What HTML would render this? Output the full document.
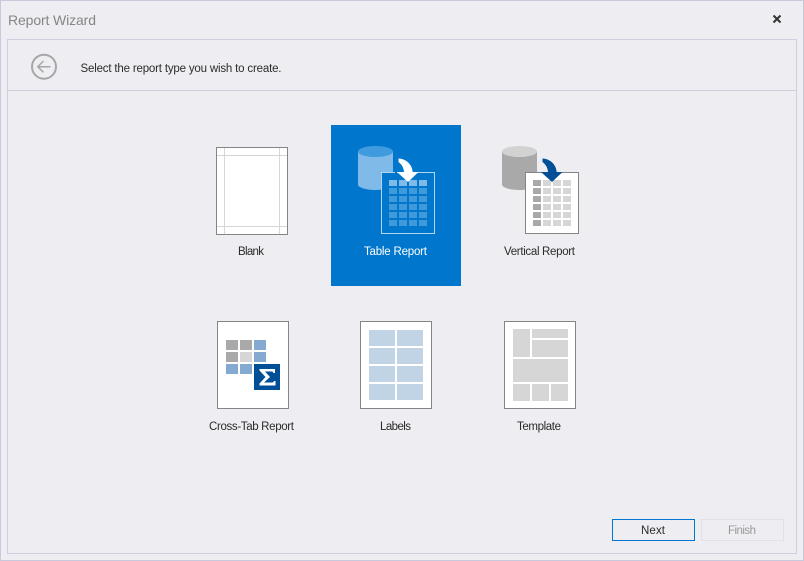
<!DOCTYPE html>
<html><head><meta charset="utf-8"><title>Report Wizard</title>
<style>
html,body{margin:0;padding:0;width:804px;height:561px;overflow:hidden;background:#eeeef2}
svg{display:block;position:absolute;left:0;top:0}
text{font-family:"Liberation Sans",sans-serif;font-size:11.5px;fill:#2b2b2b}
</style></head><body>
<svg width="804" height="561" viewBox="0 0 804 561" xmlns="http://www.w3.org/2000/svg" shape-rendering="crispEdges">
<rect x=".5" y=".5" width="803" height="560" fill="#eeeef2" stroke="#c9c9de"/>
<text x="8" y="25" textLength="88" lengthAdjust="spacing" style="font-size:14px;fill:#858585">Report Wizard</text>
<g shape-rendering="auto"><path d="M773.500 15.500l7 7M780.500 15.500l-7 7" stroke="#333" stroke-width="2" fill="none"/></g>
<rect x="7.500" y="39.500" width="789" height="514" fill="#eeeef2" stroke="#cfcfdf"/>
<rect x="8" y="90" width="788" height="1" fill="#cfcfdf"/>
<g shape-rendering="auto" fill="none" stroke="#a6a6a6">
<circle cx="44" cy="66.700" r="12" stroke-width="2"/>
<path d="M50.500 66.700H38M43.500 61l-5.700 5.700 5.700 5.700" stroke-width="1.500"/>
</g>
<text x="80.500" y="72" textLength="201" lengthAdjust="spacing">Select the report type you wish to create.</text>

<!-- Blank -->
<rect x="216.500" y="147.500" width="71" height="87" fill="#fff" stroke="#858585"/>
<path d="M224.500 148v86M279.500 148v86M217 155.500h70M217 226.500h70" stroke="#d6d6d6" fill="none"/>
<text x="238" y="255" textLength="26" lengthAdjust="spacing">Blank</text>

<!-- Table Report -->
<rect x="331" y="125" width="130" height="161" fill="#0077cc"/>
<g shape-rendering="auto">
<path d="M358 151.500v33c0 3 8 5.500 17.500 5.500s17.500-2.500 17.500-5.500v-33z" fill="#80bae8"/>
<ellipse cx="375.500" cy="151.500" rx="17.500" ry="5.500" fill="#409ade"/>
</g>
<rect x="381.500" y="172.500" width="53" height="61" fill="#0077cc" stroke="#b3d6f0"/>
<g fill="#80bbe8">
<rect x="389" y="180" width="8" height="6"/><rect x="399" y="180" width="8" height="6"/><rect x="409" y="180" width="8" height="6"/><rect x="419" y="180" width="8" height="6"/>
</g>
<g fill="#409ad9">
<rect x="389" y="188" width="8" height="6"/><rect x="399" y="188" width="8" height="6"/><rect x="409" y="188" width="8" height="6"/><rect x="419" y="188" width="8" height="6"/>
<rect x="389" y="196" width="8" height="6"/><rect x="399" y="196" width="8" height="6"/><rect x="409" y="196" width="8" height="6"/><rect x="419" y="196" width="8" height="6"/>
<rect x="389" y="204" width="8" height="6"/><rect x="399" y="204" width="8" height="6"/><rect x="409" y="204" width="8" height="6"/><rect x="419" y="204" width="8" height="6"/>
<rect x="389" y="212" width="8" height="6"/><rect x="399" y="212" width="8" height="6"/><rect x="409" y="212" width="8" height="6"/><rect x="419" y="212" width="8" height="6"/>
<rect x="389" y="220" width="8" height="6"/><rect x="399" y="220" width="8" height="6"/><rect x="409" y="220" width="8" height="6"/><rect x="419" y="220" width="8" height="6"/>
</g>
<path shape-rendering="auto" d="M398.500 158.500c8 .5 13.500 6 14.200 13.500h5.800l-10.500 10-11-10h7c-.3-4.500-2.500-7.800-5.500-10z" fill="#fff"/>
<rect x="395" y="172" width="2" height="1" fill="#0077cc"/>
<text x="364" y="255" textLength="63" lengthAdjust="spacing" style="fill:#fff">Table Report</text>

<!-- Vertical Report -->
<g shape-rendering="auto">
<path d="M502 151.500v33c0 3 8 5.500 17.500 5.500s17.500-2.500 17.500-5.500v-33z" fill="#a9a9a9"/>
<ellipse cx="519.500" cy="151.500" rx="17.500" ry="5.500" fill="#d2d2d2"/>
</g>
<rect x="525.500" y="172.500" width="53" height="61" fill="#fff" stroke="#858585"/>
<g fill="#a9a9a9">
<rect x="533" y="180" width="8" height="6"/><rect x="533" y="188" width="8" height="6"/><rect x="533" y="196" width="8" height="6"/><rect x="533" y="204" width="8" height="6"/><rect x="533" y="212" width="8" height="6"/><rect x="533" y="220" width="8" height="6"/>
</g>
<g fill="#d6d6d6">
<rect x="543" y="180" width="8" height="6"/><rect x="553" y="180" width="8" height="6"/><rect x="563" y="180" width="8" height="6"/>
<rect x="543" y="188" width="8" height="6"/><rect x="553" y="188" width="8" height="6"/><rect x="563" y="188" width="8" height="6"/>
<rect x="543" y="196" width="8" height="6"/><rect x="553" y="196" width="8" height="6"/><rect x="563" y="196" width="8" height="6"/>
<rect x="543" y="204" width="8" height="6"/><rect x="553" y="204" width="8" height="6"/><rect x="563" y="204" width="8" height="6"/>
<rect x="543" y="212" width="8" height="6"/><rect x="553" y="212" width="8" height="6"/><rect x="563" y="212" width="8" height="6"/>
<rect x="543" y="220" width="8" height="6"/><rect x="553" y="220" width="8" height="6"/><rect x="563" y="220" width="8" height="6"/>
</g>
<path shape-rendering="auto" d="M542.500 158.500c8 .5 13.500 6 14.200 13.500h5.800l-10.500 10-11-10h7c-.3-4.500-2.500-7.800-5.500-10z" fill="#004f97"/>
<text x="504" y="255" textLength="71" lengthAdjust="spacing">Vertical Report</text>

<!-- Cross-Tab -->
<rect x="217.500" y="321.500" width="71" height="87" fill="#fff" stroke="#858585"/>
<rect x="226" y="340" width="12" height="10" fill="#a9a9a9"/><rect x="240" y="340" width="12" height="10" fill="#a9a9a9"/><rect x="254" y="340" width="12" height="10" fill="#85aad2"/>
<rect x="226" y="352" width="12" height="10" fill="#a9a9a9"/><rect x="240" y="352" width="12" height="10" fill="#d6d6d6"/><rect x="254" y="352" width="12" height="10" fill="#85aad2"/>
<rect x="226" y="364" width="12" height="10" fill="#85aad2"/><rect x="240" y="364" width="12" height="10" fill="#85aad2"/>
<rect x="254" y="364" width="26" height="26" fill="#004f97"/>
<path shape-rendering="auto" d="M259.500 369H275V373H273.500L272.500 371.500H265L270 377L264 382.500H273L274 381H275.500V385.500H259.500V383.500L265.500 377L259.500 370.500Z" fill="#fff"/>
<text x="209" y="430" textLength="85" lengthAdjust="spacing">Cross-Tab Report</text>

<!-- Labels -->
<rect x="360.500" y="321.500" width="71" height="87" fill="#fff" stroke="#858585"/>
<g fill="#c1d4e6">
<rect x="369" y="330" width="26" height="16"/><rect x="397" y="330" width="26" height="16"/>
<rect x="369" y="348" width="26" height="16"/><rect x="397" y="348" width="26" height="16"/>
<rect x="369" y="366" width="26" height="16"/><rect x="397" y="366" width="26" height="16"/>
<rect x="369" y="384" width="26" height="16"/><rect x="397" y="384" width="26" height="16"/>
</g>
<text x="380" y="430" textLength="31" lengthAdjust="spacing">Labels</text>

<!-- Template -->
<rect x="504.500" y="321.500" width="71" height="87" fill="#fff" stroke="#858585"/>
<g fill="#d6d6d6">
<rect x="513" y="329" width="17" height="28"/>
<rect x="532" y="329" width="36" height="9"/>
<rect x="532" y="340" width="36" height="17"/>
<rect x="513" y="359" width="55" height="23"/>
<rect x="513" y="384" width="17" height="17"/>
<rect x="532" y="384" width="17" height="17"/>
<rect x="551" y="384" width="17" height="17"/>
</g>
<text x="517" y="430" textLength="44" lengthAdjust="spacing">Template</text>

<!-- Buttons -->
<rect x="612.500" y="519.500" width="82" height="21" fill="#eeeef2" stroke="#0078d0"/>
<text x="641" y="534" textLength="24" lengthAdjust="spacing">Next</text>
<rect x="701.500" y="519.500" width="82" height="21" fill="#eeeef2" stroke="#e0e0e6"/>
<text x="728" y="534" textLength="28" lengthAdjust="spacing" style="fill:#9a9a9a">Finish</text>
</svg>
</body></html>
